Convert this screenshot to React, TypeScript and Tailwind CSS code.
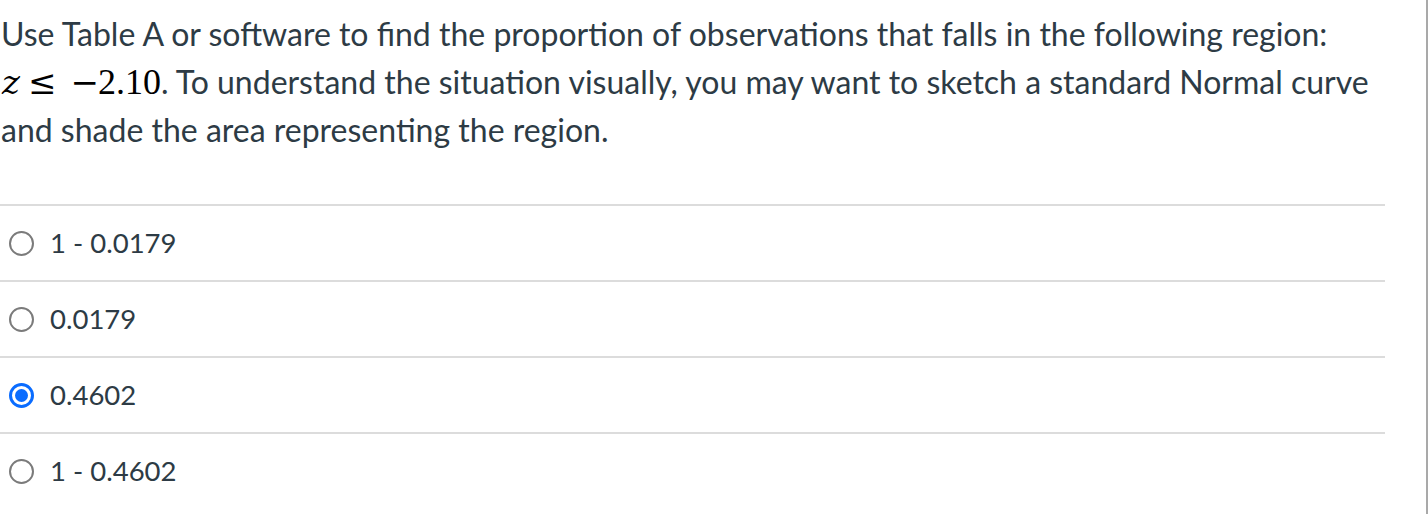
import React from "react";

const options = [
  { label: "1 - 0.0179", selected: false },
  { label: "0.0179", selected: false },
  { label: "0.4602", selected: true },
  { label: "1 - 0.4602", selected: false },
];

function Radio({ selected }: { selected: boolean }) {
  if (selected) {
    return (
      <span className="flex h-[25px] w-[25px] shrink-0 items-center justify-center rounded-full border-[3px] border-[#0a6cff] bg-white">
        <span className="h-[13px] w-[13px] rounded-full bg-[#0a6cff]" />
      </span>
    );
  }
  return (
    <span className="h-[25px] w-[25px] shrink-0 rounded-full border-2 border-[#7b7b7b] bg-white" />
  );
}

export default function App() {
  return (
    <div className="flex h-[514px] w-[1428px] overflow-hidden bg-white font-['Lato',sans-serif] text-[#2d3b45]">
      <div className="flex-1">
        <div className="w-[1385px]">
          <div className="pt-[10px] pl-[1px] pb-[50px] text-[32px] leading-[48px]">
            <p>
              Use Table A or software to find the proportion of observations that falls in the following region:{" "}
              <span className="font-['Liberation_Serif',serif] text-[36px] leading-none text-black">
                <i className="ml-[1px] mr-[8px] font-['DejaVu_Serif',serif] text-[34px]">z</i>
                <span className="mr-[14px] font-['DejaVu_Serif',serif] text-[34px]">≤</span>
                <span className="mr-[-1px] font-['DejaVu_Serif',serif] text-[34px]">−</span>
                <span>2.10</span>
              </span>
              . To understand the situation visually, you may want to sketch a standard Normal curve and shade
              the area representing the region.
            </p>
          </div>
          <div>
            {options.map((o) => (
              <div
                key={o.label}
                className="flex h-[76px] items-center gap-[16px] border-t-2 border-[#dcdcdc] pl-[9px]"
              >
                <Radio selected={o.selected} />
                <span className="text-[27.5px]">{o.label}</span>
              </div>
            ))}
          </div>
        </div>
      </div>
      <div className="w-[2px] shrink-0 bg-[#a9a9a9]" />
    </div>
  );
}
